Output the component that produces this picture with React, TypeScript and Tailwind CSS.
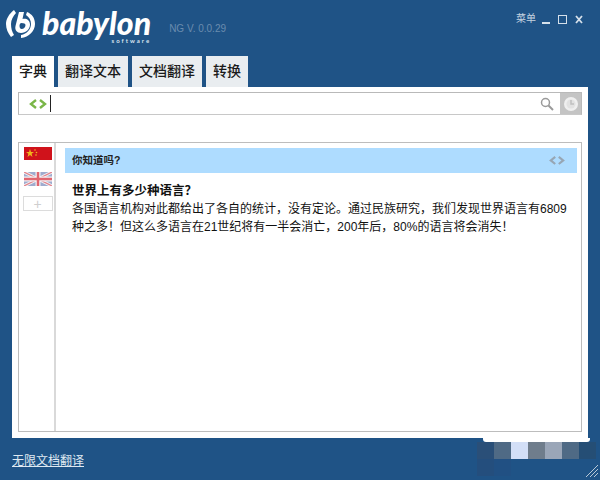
import React from "react";

const cjk = { fontFamily: '"Liberation Sans", "Noto Sans CJK SC", sans-serif' };
const logoFont = { fontFamily: 'Lato, "Liberation Sans", sans-serif' };

const Chevrons = ({ color, size = 18 }: { color: string; size?: number }) => (
  <svg width={size} height={(size * 10) / 18} viewBox="0 0 18 10" fill="none" stroke={color} strokeWidth="2.400">
    <path d="M7 1 L2 5 L7 9" />
    <path d="M11 1 L16 5 L11 9" />
  </svg>
);

const Logo = () => (
  <svg width="30" height="30" viewBox="0 0 30 30" fill="white">
    <path d="M8 1 C3 5 0 10 0 15 C0 20 2 24 5 28 L8 26 C6 23 5 19 5 15 C5 11 7 7 10 4 Z" />
    <path d="M21 3 C26 5 29 9 29 15 C29 22 23 28 15 29 L15 26 C21 25 25 20 25 15 C25 11 23 8 20 6 Z" />
    <path fillRule="evenodd" d="M13 3 L18 3 L16.500 10 C20 9 24 11 24 15.500 C24 20 20 24 15 24 C11 24 8.500 21 9.500 17 Z M15.500 14 C14 14 13.500 15.500 13.500 17 C13.500 19 14.500 20 15.500 20 C18 20 19.500 18 19.500 16 C19.500 14.800 18 14 15.500 14 Z" />
  </svg>
);

const ChinaFlag = () => (
  <svg width="28" height="13" viewBox="0 0 28 13">
    <rect width="28" height="13" fill="#d0121b" />
    <path d="M6 2 L7 5 L10 5 L7.600 6.800 L8.500 10 L6 8 L3.500 10 L4.400 6.800 L2 5 L5 5 Z" fill="#f0b41c" />
    <circle cx="11" cy="3" r="0.8" fill="#f0b41c" />
    <circle cx="12.500" cy="5.500" r="0.8" fill="#f0b41c" />
    <circle cx="12" cy="8" r="0.8" fill="#f0b41c" />
  </svg>
);

const UkFlag = () => (
  <svg width="28" height="14" viewBox="0 0 28 14">
    <rect width="28" height="14" fill="#9fabce" />
    <path d="M0 0 L28 14 M28 0 L0 14" stroke="#f3f3f6" strokeWidth="3" />
    <path d="M0 0 L28 14 M28 0 L0 14" stroke="#e2838b" strokeWidth="1.200" />
    <path d="M14 0 V14 M0 7 H28" stroke="#f3f3f6" strokeWidth="5" />
    <path d="M14 0 V14 M0 7 H28" stroke="#e0656f" strokeWidth="2.500" />
  </svg>
);

const tabs = ["字典", "翻译文本", "文档翻译", "转换"];

export default function App() {
  return (
    <div className="relative w-[600px] h-[480px] bg-[#1f5386] flex flex-col overflow-hidden" style={cjk}>
      {/* title bar */}
      <div className="h-[56px] flex items-start justify-between pl-[6px] pr-[17px]">
        <div className="flex items-start pt-[9px]">
          <Logo />
          <div className="flex flex-col items-end ml-[6px] -mt-[1px]" style={logoFont}>
            <span className="text-[32px] leading-[30px] font-black italic text-white">babylon</span>
            <span className="text-[6px] leading-[6px] font-bold text-[#dbe6f0] tracking-[2px]">software</span>
          </div>
          <span className="ml-[18px] mt-[14px] text-[10px] leading-[12px] text-[#6a8cae]">NG V. 0.0.29</span>
        </div>
        <div className="flex items-center gap-[8px] pt-[13px] text-[#c5d3e0]">
          <span className="text-[10px] leading-[12px] -mr-[2px]">菜单</span>
          <div className="w-[8px] h-[2px] bg-[#d5e0ea] mt-[7px]" />
          <div className="w-[9px] h-[9px] border-[1.5px] border-[#d5e0ea]" />
          <svg width="8" height="9" viewBox="0 0 8 9" fill="none" stroke="#d5e0ea" strokeWidth="1.800">
            <path d="M1 1 L7 8 M7 1 L1 8" />
          </svg>
        </div>
      </div>

      {/* tabs */}
      <div className="h-[31px] flex gap-[4px] pl-[12px]">
        {tabs.map((t, i) => (
          <div
            key={t}
            className={`px-[7px] flex items-center justify-center text-[14px] font-medium text-[#1a1a1a] ${
              i === 0 ? "bg-white" : "bg-[#e9edf0]"
            }`}
          >
            {t}
          </div>
        ))}
      </div>

      {/* main panel */}
      <div className="mx-[12px] h-[351px] bg-white p-[6px] pt-[5px] flex flex-col">
        <div className="h-[23px] border border-[#b9b9b9] border-b-[#c8c8c8] flex items-center pl-[10px]">
          <Chevrons color="#7ab648" />
          <div className="w-[1px] h-[17px] bg-[#222] ml-[3px]" />
          <div className="ml-auto flex items-center h-full">
            <svg width="14" height="14" viewBox="0 0 14 14" fill="none" stroke="#9a9a9a" strokeWidth="1.500" className="mr-[6px]">
              <circle cx="5.500" cy="5.500" r="4" />
              <path d="M8.500 8.500 L13 13" strokeWidth="2" />
            </svg>
            <div className="w-[21px] h-full bg-[#c4c4c4] flex items-center justify-center">
              <svg width="16" height="16" viewBox="0 0 16 16" fill="none">
                <circle cx="8" cy="8" r="7" fill="#efefef" />
                <circle cx="8" cy="8" r="4.500" fill="#e2e2e2" />
                <path d="M8 4 V8 H11" stroke="#c0c0c0" strokeWidth="1.500" />
              </svg>
            </div>
          </div>
        </div>

        <div className="mt-[27px] h-[290px] border border-[#bdbdbd] flex">
          <div className="w-[37px] border-r-2 border-[#d9d9d9] flex flex-col items-center pt-[4px] pl-[2px] shrink-0">
            <ChinaFlag />
            <div className="mt-[12px]">
              <UkFlag />
            </div>
            <div className="mt-[10px] w-[30px] h-[15px] border border-[#dcdcdc] flex items-center justify-center text-[#cfcfcf] text-[14px] leading-none">
              +
            </div>
          </div>
          <div className="flex-1 pl-[9px] pr-[4px] pt-[5px]">
            <div className="h-[25px] bg-[#aedcff] flex items-center justify-between pl-[7px] pr-[12px]">
              <span className="text-[10.500px] font-bold text-[#222]">你知道吗?</span>
              <Chevrons color="#97a6b4" size={16} />
            </div>
            <div className="pl-[7px] pt-[9px] text-[#111]">
              <div className="text-[12.500px] leading-[18px] font-bold">世界上有多少种语言？</div>
              <p className="text-[12px] leading-[18px] w-[498px]">
                各国语言机构对此都给出了各自的统计，没有定论。通过民族研究，我们发现世界语言有6809种之多！但这么多语言在21世纪将有一半会消亡，200年后，80%的语言将会消失！
              </p>
            </div>
          </div>
        </div>
      </div>

      {/* footer */}
      <div className="flex-1 pl-[12px] pt-[10px]">
        <span className="text-[12px] leading-[18px] text-[#dfe9f2] underline">无限文档翻译</span>
      </div>

      {/* white bleed and mosaic watermark over the bottom right corner */}
      <div className="absolute left-[483px] top-[438px] w-[107px] h-[4px] bg-white rounded-b-[3px]" />
      <div className="absolute left-[477px] top-[442px] grid grid-cols-[repeat(7,17px)] grid-rows-[17px_17px]">
        <div className="bg-[#2a4f78]" />
        <div className="bg-[#4f6a85]" />
        <div className="bg-[#d3dff7]" />
        <div className="bg-[#6f7d8c]" />
        <div className="bg-[#9aa6b8]" />
        <div className="bg-[#4f6a85]" />
        <div className="bg-[#254e75]" />
        <div className="bg-[#244e7d]" />
        <div className="bg-[#215083]" />
      </div>

      {/* resize grip */}
      <svg width="14" height="14" viewBox="0 0 14 14" stroke="#b9c9d8" strokeWidth="1" className="absolute right-[1px] bottom-[2px]">
        <path d="M1 13 L13 1 M5 13 L13 5 M9 13 L13 9" />
      </svg>
    </div>
  );
}
